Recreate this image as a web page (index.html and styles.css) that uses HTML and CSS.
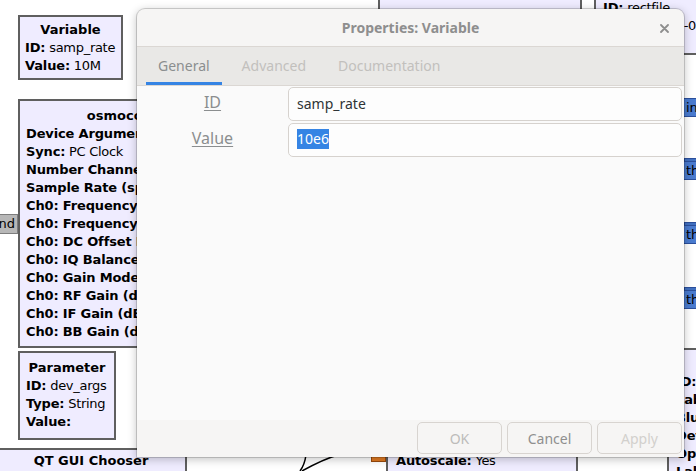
FILE: index.html
```html
<!DOCTYPE html>
<html>
<head>
<meta charset="utf-8">
<link rel="stylesheet" href="styles.css">
</head>
<body>
<div class="canvas">
  <div class="block b-var">
    <div class="title">Variable</div>
    <div><b>ID:</b> samp_rate</div>
    <div><b>Value:</b> 10M</div>
  </div>
  <div class="port gray p-cmd">Command</div>
  <div class="block b-osmo">
    <div class="title">osmocom Source</div>
    <div><b>Device Arguments:</b> dev_args</div>
    <div><b>Sync:</b> PC Clock</div>
    <div><b>Number Channels:</b> 1</div>
    <div><b>Sample Rate (sps):</b> 10M</div>
    <div><b>Ch0: Frequency (Hz):</b> 100M</div>
    <div><b>Ch0: Frequency Correction:</b> 0</div>
    <div><b>Ch0: DC Offset Mode:</b> Off</div>
    <div><b>Ch0: IQ Balance Mode:</b> Off</div>
    <div><b>Ch0: Gain Mode:</b> False</div>
    <div><b>Ch0: RF Gain (dB):</b> 10</div>
    <div><b>Ch0: IF Gain (dB):</b> 20</div>
    <div><b>Ch0: BB Gain (dB):</b> 20</div>
  </div>
  <div class="block b-param">
    <div class="title">Parameter</div>
    <div><b>ID:</b> dev_args</div>
    <div><b>Type:</b> String</div>
    <div><b>Value:</b></div>
  </div>
  <div class="block b-chooser">
    <div class="title">QT GUI Chooser</div>
  </div>
  <div class="block b-sink">
    <div><b>Autoscale:</b> Yes</div>
  </div>
  <div class="port orange p-orange"></div>
  <div class="block b-var2">
    <div class="title">Variable</div>
  </div>
  <div class="block b-rect">
    <div><b>ID:</b> rectfile</div>
    <div><b>Value:</b> 2019-09-20</div>
  </div>
  <div class="block b-right">
    <div class="title">QT GUI Chooser</div>
    <div><b>ID:</b></div>
    <div><b>Lab</b></div>
    <div><b>Blur</b></div>
    <div><b>Def</b></div>
    <div><b>Options</b></div>
    <div><b>Lal</b></div>
  </div>
  <div class="port blue p-in">in</div>
  <div class="port blue back p-t1b"></div>
  <div class="port blue p-t1">th</div>
  <div class="port blue back p-t2b"></div>
  <div class="port blue p-t2">th</div>
  <div class="port blue back p-t3b"></div>
  <div class="port blue p-t3">th</div>
  <svg class="wire" width="696" height="471" viewBox="0 0 696 471">
    <path d="M306 455 C305 462 303 467 300 471" fill="none" stroke="#000" stroke-width="1.5"/>
    <path d="M302 471 C311 466 324 459 338 455" fill="none" stroke="#000" stroke-width="1.5"/>
  </svg>
</div>

<div class="dialog">
  <div class="hdr">
    <span></span>
    <span class="dtitle">Properties: Variable</span>
    <span class="close">
      <svg width="9" height="9" viewBox="0 0 9 9"><path d="M1 1 L8 8 M8 1 L1 8" stroke="#8e8e8e" stroke-width="1.8" stroke-linecap="round"/></svg>
    </span>
  </div>
  <div class="tabs">
    <div class="tab active">General</div>
    <div class="tab">Advanced</div>
    <div class="tab">Documentation</div>
  </div>
  <div class="content">
    <div class="row">
      <span class="lbl">ID</span>
      <div class="entry">samp_rate</div>
    </div>
    <div class="row">
      <span class="lbl">Value</span>
      <div class="entry"><span class="sel">10e6</span></div>
    </div>
  </div>
  <div class="actions">
    <button class="btn ok">OK</button>
    <button class="btn cancel">Cancel</button>
    <button class="btn apply">Apply</button>
  </div>
</div>
</body>
</html>
```
FILE: styles.css
```css
html, body {
  margin: 0;
  padding: 0;
}
body {
  width: 696px;
  height: 471px;
  overflow: hidden;
  position: relative;
  background: #ffffff;
  font-family: "DejaVu Sans", sans-serif;
}

.canvas {
  position: absolute;
  left: 0;
  top: 0;
  width: 696px;
  height: 471px;
  overflow: hidden;
}

.block {
  position: absolute;
  box-sizing: border-box;
  background: #efecff;
  border: 2px solid #5f5f5f;
  font-size: 13px;
  line-height: 18px;
  letter-spacing: -0.3px;
  color: #000;
  white-space: nowrap;
  overflow: hidden;
}
.block b {
  font-weight: bold;
  letter-spacing: -0.15px;
}
.block .title {
  font-weight: bold;
  text-align: center;
  letter-spacing: 0;
}

.b-var { left: 18px; top: 15px; width: 105px; height: 65px; padding: 4px 5px 0 5px; }
.b-osmo { left: 18px; top: 99px; width: 262px; height: 249px; padding: 6px 6px 0 6px; }
.b-param { left: 18px; top: 351px; width: 98px; height: 89px; padding: 6px 6px 0 6px; }
.b-chooser { left: -5px; top: 448px; width: 192px; height: 40px; padding: 2px 6px 0 6px; }
.b-sink { left: 386px; top: 443px; width: 192px; height: 60px; padding: 7px 6px 0 8px; }
.b-var2 { left: 378px; top: -17px; width: 204px; height: 60px; padding: 2px 6px 0 6px; }
.b-rect { left: 594px; top: -5px; width: 160px; height: 60px; padding: 2px 6px 0 7px; }
.b-right { left: 667px; top: 348px; width: 80px; height: 140px; padding: 5px 6px 0 7px; }
.b-right .title { text-align: left; color: transparent; }

.port {
  position: absolute;
  box-sizing: border-box;
  font-size: 13px;
  line-height: 17px;
  white-space: nowrap;
  overflow: hidden;
}
.gray { background: #b7b7b7; border: 1px solid #7d7d7d; color: #000; }
.blue { background: #4a7bcf; border: 1px solid #2b4f9c; color: #000; }
.blue.back { background: #4170c0; }
.orange { background: #e27b22; border: 1px solid #9a4a0e; }

.p-cmd { left: -62px; top: 214px; width: 80px; height: 20px; text-align: right; padding-right: 2px; }
.p-in { left: 681px; top: 98px; width: 30px; height: 19px; padding-left: 4px; }
.p-t1b { left: 684px; top: 158px; width: 30px; height: 18px; }
.p-t1 { left: 681px; top: 161px; width: 30px; height: 19px; padding-left: 4px; }
.p-t2b { left: 684px; top: 222px; width: 30px; height: 18px; }
.p-t2 { left: 681px; top: 225px; width: 30px; height: 19px; padding-left: 4px; }
.p-t3b { left: 684px; top: 287px; width: 30px; height: 18px; }
.p-t3 { left: 681px; top: 290px; width: 30px; height: 19px; padding-left: 4px; }
.p-orange { left: 371px; top: 450px; width: 15px; height: 12px; }

.wire {
  position: absolute;
  left: 0;
  top: 0;
}

/* dialog window */
.dialog {
  position: absolute;
  left: 137px;
  top: 9px;
  width: 547px;
  height: 448px;
  display: flex;
  flex-direction: column;
  background: #f6f5f4;
  border-radius: 8px 8px 0 0;
  box-shadow: 0 0 0 1px rgba(0, 0, 0, 0.16), 0 2px 8px 1px rgba(0, 0, 0, 0.22);
  font-family: "Noto Sans", "Open Sans", sans-serif;
  font-size: 14px;
  overflow: hidden;
}

.hdr {
  height: 36px;
  flex: none;
  display: grid;
  grid-template-columns: 1fr auto 1fr;
  align-items: center;
  border-bottom: 1px solid #dbd7d3;
  padding-top: 1px;
  box-sizing: content-box;
}
.dtitle {
  font-weight: bold;
  color: #8e8e8e;
  margin-top: -1px;
}
.close {
  justify-self: end;
  margin-right: 15px;
  display: flex;
}

.tabs {
  flex: none;
  height: 38px;
  display: flex;
  gap: 8px;
  padding: 0 0 0 9px;
  background: #e9e8e6;
  border-bottom: 1px solid #dbd7d3;
  box-sizing: content-box;
}
.tab {
  padding: 0 12px 1px 12px;
  display: flex;
  align-items: center;
  color: #c2c0bd;
}
.tab.active {
  color: #8b8e8f;
  box-shadow: inset 0 -3px 0 #3584e4;
}

.content {
  flex: 1;
  background: #fafafa;
  padding-top: 1px;
  display: flex;
  flex-direction: column;
  gap: 2px;
}
.row {
  display: grid;
  grid-template-columns: 151px 1fr;
  height: 34px;
}
.lbl {
  align-self: center;
  justify-self: center;
  margin-bottom: 4px;
  font-size: 16px;
  color: #8b8e8f;
  text-decoration: underline;
  text-decoration-thickness: 1px;
  text-underline-offset: 2px;
}
.entry {
  margin-right: 2px;
  border: 1px solid #d6d2ce;
  border-radius: 5px;
  background: #fdfdfd;
  padding-left: 8px;
  padding-bottom: 2px;
  display: flex;
  align-items: center;
  color: #2e3436;
}
.sel {
  background: #3584e4;
  color: #ffffff;
  line-height: 20px;
}

.actions {
  flex: none;
  height: 37px;
  box-sizing: border-box;
  display: flex;
  justify-content: flex-end;
  gap: 5px;
  padding: 2px 2px 3px 0;
}
.btn {
  width: 85px;
  height: 32px;
  border: 1px solid #d8d4d0;
  border-radius: 5px;
  background: #f6f5f4;
  font-family: "Noto Sans", "Open Sans", sans-serif;
  font-size: 14px;
  padding: 0;
}
.ok { color: #bdbcba; }
.cancel { color: #8f8f8f; }
.apply { color: #d2d0cd; }
```
